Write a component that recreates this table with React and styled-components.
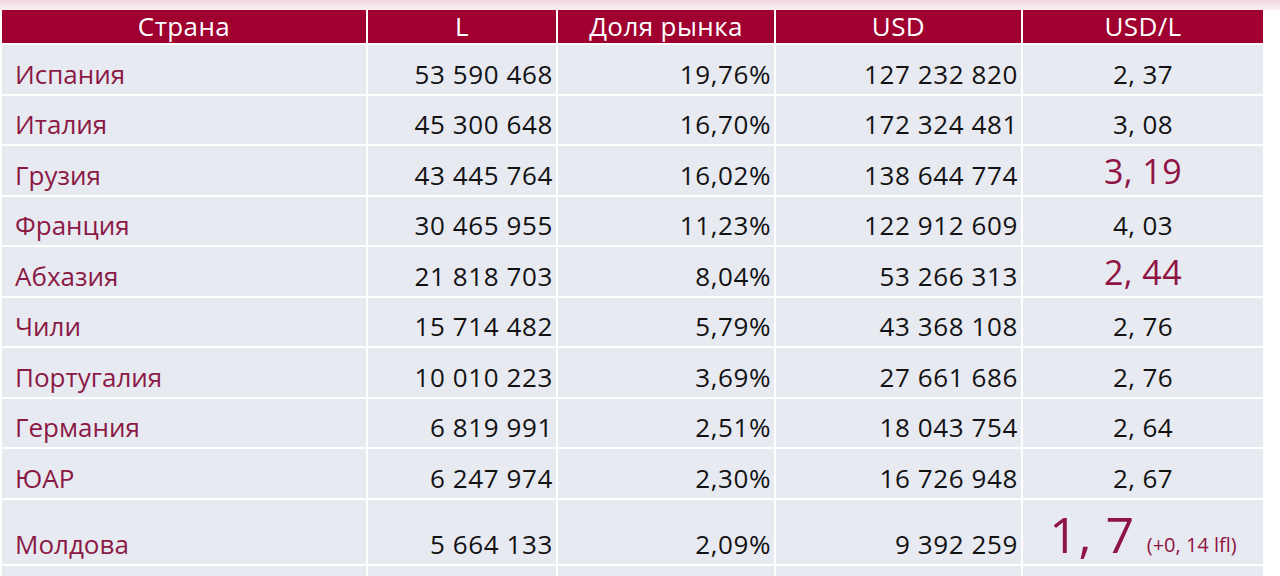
import styled, { createGlobalStyle } from "styled-components";

const GlobalStyle = createGlobalStyle`
  body {
    margin: 0;
    background: #ffffff;
    font-family: "Open Sans", "Liberation Sans", sans-serif;
  }
`;

const Page = styled.div`
  width: 1280px;
  height: 576px;
  overflow: hidden;
  background: #ffffff;
`;

const TopStrip = styled.div`
  height: 10px;
  background: linear-gradient(#f1d9e0, #fbf1f4);
`;

const Table = styled.div`
  margin-left: 2px;
  width: 1261px;
  display: grid;
  grid-template-columns: 364px 188px 216px 245px 240px;
  grid-template-rows: 33px repeat(9, 48.5px) 64px 40px;
  gap: 2px;
`;

const HeadCell = styled.div`
  background: #9f0030;
  color: #ffffff;
  font-size: 26px;
  letter-spacing: 0.4px;
  display: flex;
  align-items: center;
  justify-content: center;
  line-height: 1;
  padding-bottom: 1px;
`;

const Cell = styled.div`
  background: #e8eaf2;
  display: flex;
  align-items: flex-end;
  justify-content: ${(p) =>
    p.$align === "left" ? "flex-start" : p.$align === "center" ? "center" : "flex-end"};
  padding: ${(p) =>
    p.$align === "left" ? "0 0 2px 13px" : p.$align === "center" ? "0 0 2px 0" : "0 3px 2px 0"};
  color: ${(p) => (p.$country ? "#8a1a45" : "#121212")};
  font-size: 26px;
  letter-spacing: ${(p) => (p.$country ? "0" : "0.6px")};
  line-height: 1.3;
  white-space: nowrap;
  box-sizing: border-box;
`;

const Ratio = styled.span`
  color: ${(p) => (p.$accent ? "#8f1443" : "#121212")};
  font-size: ${(p) => (p.$accent ? "34px" : "26px")};
  letter-spacing: 0.4px;
  line-height: 1.3;
  margin-bottom: ${(p) => (p.$accent ? "-1px" : "0")};
`;

const BigRatio = styled.span`
  color: #8f1443;
  font-size: 50px;
  line-height: 1;
  margin-bottom: 3px;
`;

const Note = styled.span`
  color: #8f1443;
  font-size: 20px;
  letter-spacing: 0;
  margin: 0 0 4px 12px;
  line-height: 1.3;
`;

const rows = [
  ["Испания", "53 590 468", "19,76%", "127 232 820", "2, 37"],
  ["Италия", "45 300 648", "16,70%", "172 324 481", "3, 08"],
  ["Грузия", "43 445 764", "16,02%", "138 644 774", "3, 19", true],
  ["Франция", "30 465 955", "11,23%", "122 912 609", "4, 03"],
  ["Абхазия", "21 818 703", "8,04%", "53 266 313", "2, 44", true],
  ["Чили", "15 714 482", "5,79%", "43 368 108", "2, 76"],
  ["Португалия", "10 010 223", "3,69%", "27 661 686", "2, 76"],
  ["Германия", "6 819 991", "2,51%", "18 043 754", "2, 64"],
  ["ЮАР", "6 247 974", "2,30%", "16 726 948", "2, 67"],
];

const headers = ["Страна", "L", "Доля рынка", "USD", "USD/L"];

export default function App() {
  return (
    <Page>
      <GlobalStyle />
      <TopStrip />
      <Table>
        {headers.map((h) => (
          <HeadCell key={h}>{h}</HeadCell>
        ))}
        {rows.map(([country, liters, share, usd, ratio, accent]) => [
          <Cell key={country + "-c"} $align="left" $country>
            {country}
          </Cell>,
          <Cell key={country + "-l"}>{liters}</Cell>,
          <Cell key={country + "-s"}>{share}</Cell>,
          <Cell key={country + "-u"}>{usd}</Cell>,
          <Cell key={country + "-r"} $align="center">
            <Ratio $accent={accent}>{ratio}</Ratio>
          </Cell>,
        ])}
        <Cell $align="left" $country>
          Молдова
        </Cell>
        <Cell>5 664 133</Cell>
        <Cell>2,09%</Cell>
        <Cell>9 392 259</Cell>
        <Cell $align="center">
          <BigRatio>1, 7</BigRatio>
          <Note>(+0, 14 lfl)</Note>
        </Cell>
        <Cell />
        <Cell />
        <Cell />
        <Cell />
        <Cell />
      </Table>
    </Page>
  );
}
